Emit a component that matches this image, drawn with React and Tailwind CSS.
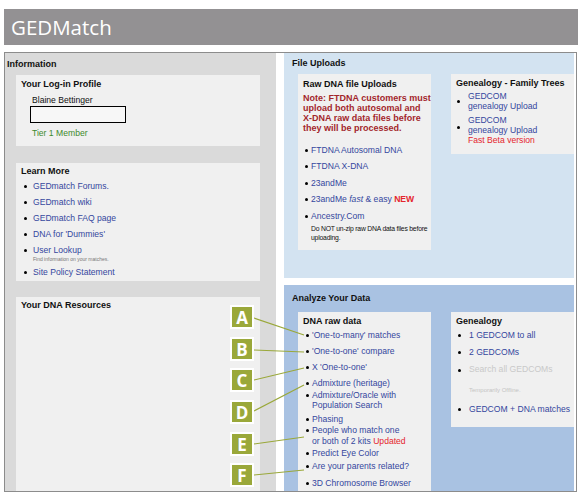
import React from "react";

const Dot = ({ className = "mt-[4px]" }) => (
  <span className={`block w-[3px] h-[3px] rounded-full bg-black shrink-0 ${className}`} />
);

const learnMore = [
  { label: "GEDmatch Forums." },
  { label: "GEDmatch wiki" },
  { label: "GEDmatch FAQ page" },
  { label: "DNA for 'Dummies'" },
  { label: "User Lookup", note: "Find information on your matches." },
  { label: "Site Policy Statement" },
];

// raw data list, margins read off the screenshot
const rawData = [
  { mt: "mt-[3.5px]", lines: ["'One-to-many' matches"] },
  { mt: "mt-[6px]", lines: ["'One-to-one' compare"] },
  { mt: "mt-[5px]", lines: ["X 'One-to-one'"] },
  { mt: "mt-[6px]", lines: ["Admixture (heritage)"] },
  { mt: "mt-[1px]", lines: ["Admixture/Oracle with", "Population Search"] },
  { mt: "mt-[3px]", lines: ["Phasing"] },
  { mt: "mt-[1px]", lines: ["People who match one", "or both of 2 kits"], updated: true },
  { mt: "mt-[2px]", lines: ["Predict Eye Color"] },
  { mt: "mt-[2px]", lines: ["Are your parents related?"] },
  { mt: "mt-[7px]", lines: ["3D Chromosome Browser"] },
];

const callouts = [
  { letter: "A", top: "top-[305px]", y: 318, ty: 335 },
  { letter: "B", top: "top-[337px]", y: 350, ty: 352 },
  { letter: "C", top: "top-[368px]", y: 380, ty: 368 },
  { letter: "D", top: "top-[400px]", y: 411, ty: 385 },
  { letter: "E", top: "top-[432px]", y: 444, ty: 437 },
  { letter: "F", top: "top-[463px]", y: 475, ty: 470 },
];

export default function App() {
  return (
    <div className="relative w-[583px] h-[502px] bg-white overflow-hidden font-['Liberation_Sans',Arial,sans-serif] text-[8.6px] text-[#111]">
      {/* header */}
      <div className="ml-[4px] mt-[9px] w-[574px] h-[36px] bg-[#939193] flex items-center pl-[7px]">
        <span className="font-['Open_Sans',sans-serif] text-[20.5px] text-white leading-none">GEDMatch</span>
      </div>

      {/* main frame */}
      <div className="ml-[4px] mt-[7px] w-[573px] h-[440px] border border-[#8c8c8c] flex">
        {/* left column */}
        <div className="w-[271px] bg-[#dadada] flex flex-col">
          <div className="pl-[2px] pt-[6px] leading-[10px] text-[9px] font-bold">Information</div>

          <div className="ml-[11px] mt-[6px] w-[244px] h-[71px] bg-[#f0f0f0]">
            <div className="pl-[5px] pt-[4px] leading-[10px] text-[9px] font-bold">Your Log-in Profile</div>
            <div className="pl-[16px] mt-[6px] leading-[10px]">Blaine Bettinger</div>
            <div className="ml-[14px] mt-[1px] w-[96px] h-[17px] border border-black bg-[#f7f7f7]" />
            <div className="pl-[16px] mt-[5px] leading-[10px] text-[#3d8a2c]">Tier 1 Member</div>
          </div>

          <div className="ml-[11px] mt-[17px] w-[244px] h-[118px] bg-[#f0f0f0]">
            <div className="pl-[5px] pt-[3px] leading-[10px] text-[9px] font-bold">Learn More</div>
            <ul className="mt-[4.5px] flex flex-col gap-[5px]">
              {learnMore.map((item) => (
                <li key={item.label} className="flex items-start pl-[8px]">
                  <Dot />
                  <div className="ml-[6px]">
                    <div className="leading-[11px] text-[#34479e]">{item.label}</div>
                    {item.note && (
                      <div className="text-[5px] leading-[6px] text-[#777]">{item.note}</div>
                    )}
                  </div>
                </li>
              ))}
            </ul>
          </div>

          <div className="ml-[11px] mt-[16px] w-[244px] flex-1 bg-[#f0f0f0]">
            <div className="pl-[5px] pt-[3px] leading-[10px] text-[9px] font-bold">Your DNA Resources</div>
          </div>
        </div>

        {/* right column */}
        <div className="ml-[8px] w-[290px] flex flex-col">
          <div className="h-[225px] bg-[#d3e3f1]">
            <div className="pl-[8px] pt-[5px] leading-[10px] text-[9px] font-bold">File Uploads</div>
            <div className="mt-[6px] flex items-start">
              <div className="ml-[14px] w-[133px] h-[176px] bg-[#f0f0f0]">
                <div className="pl-[5px] pt-[5px] leading-[10px] text-[9px] font-bold">Raw DNA file Uploads</div>
                <div className="pl-[5px] mt-[4px] leading-[10px] text-[9px] font-bold text-[#a3262b]">
                  Note: FTDNA customers must upload both autosomal and X-DNA raw data files before they will be processed.
                </div>
                <ul className="mt-[11.5px] flex flex-col gap-[5.5px]">
                  <li className="flex items-start pl-[7px]">
                    <Dot />
                    <span className="ml-[3px] leading-[11px] text-[#34479e]">FTDNA Autosomal DNA</span>
                  </li>
                  <li className="flex items-start pl-[7px]">
                    <Dot />
                    <span className="ml-[3px] leading-[11px] text-[#34479e]">FTDNA X-DNA</span>
                  </li>
                  <li className="flex items-start pl-[7px]">
                    <Dot />
                    <span className="ml-[3px] leading-[11px] text-[#34479e]">23andMe</span>
                  </li>
                  <li className="flex items-start pl-[7px]">
                    <Dot />
                    <span className="ml-[3px] leading-[11px] text-[#34479e]">
                      23andMe <i>fast</i> &amp; easy <span className="font-bold text-[#e5252d]">NEW</span>
                    </span>
                  </li>
                  <li className="flex items-start pl-[7px]">
                    <Dot />
                    <div className="ml-[3px]">
                      <div className="leading-[11px] text-[#34479e]">Ancestry.Com</div>
                      <div className="mt-[2px] text-[6.8px] leading-[9px] tracking-[-0.2px] text-[#111]">
                        Do NOT un-zip raw DNA data files before uploading.
                      </div>
                    </div>
                  </li>
                </ul>
              </div>

              <div className="ml-[20px] flex-1 h-[80px] bg-[#f0f0f0]">
                <div className="pl-[5px] pt-[4px] leading-[10px] text-[9px] font-bold">Genealogy - Family Trees</div>
                <ul className="mt-[3px] flex flex-col gap-[4px]">
                  <li className="flex items-start pl-[6px]">
                    <Dot className="mt-[8.5px]" />
                    <div className="ml-[8px] leading-[10px] text-[#34479e]">
                      GEDCOM<br />genealogy Upload
                    </div>
                  </li>
                  <li className="flex items-start pl-[6px]">
                    <Dot className="mt-[10.5px]" />
                    <div className="ml-[8px] leading-[10px] text-[#34479e]">
                      GEDCOM<br />genealogy Upload<br />
                      <span className="text-[#e5252d]">Fast Beta version</span>
                    </div>
                  </li>
                </ul>
              </div>
            </div>
          </div>

          <div className="mt-[7px] flex-1 bg-[#a9c2e2] flex flex-col">
            <div className="pl-[8px] pt-[8px] leading-[10px] text-[9px] font-bold">Analyze Your Data</div>
            <div className="mt-[9px] flex flex-1 items-start">
              <div className="ml-[14px] w-[133px] self-stretch bg-[#f0f0f0]">
                <div className="pl-[5px] pt-[4px] leading-[10px] text-[9px] font-bold">DNA raw data</div>
                <ul className="flex flex-col">
                  {rawData.map((item) => (
                    <li key={item.lines[0]} className={`flex items-start pl-[8px] ${item.mt}`}>
                      <Dot />
                      <div className="ml-[3px] leading-[10.5px] text-[#34479e]">
                        {item.lines.map((l, i) => (
                          <div key={l}>
                            {l}
                            {item.updated && i === item.lines.length - 1 && (
                              <span className="text-[#e5252d]"> Updated</span>
                            )}
                          </div>
                        ))}
                      </div>
                    </li>
                  ))}
                </ul>
              </div>

              <div className="ml-[20px] flex-1 h-[115px] bg-[#f0f0f0]">
                <div className="pl-[5px] pt-[4px] leading-[10px] text-[9px] font-bold">Genealogy</div>
                <ul className="flex flex-col">
                  <li className="flex items-start pl-[7px] mt-[3.5px]">
                    <Dot />
                    <span className="ml-[8px] leading-[11px] text-[#34479e]">1 GEDCOM to all</span>
                  </li>
                  <li className="flex items-start pl-[7px] mt-[6px]">
                    <Dot />
                    <span className="ml-[8px] leading-[11px] text-[#34479e]">2 GEDCOMs</span>
                  </li>
                  <li className="flex items-start pl-[7px] mt-[6px]">
                    <Dot className="mt-[5px]" />
                    <div className="ml-[8px]">
                      <div className="leading-[11px] text-[#c9c9c9]">Search all GEDCOMs</div>
                      <div className="mt-[12px] text-[6px] leading-[6px] text-[#c4c4c4]">Temporarily Offline.</div>
                    </div>
                  </li>
                  <li className="flex items-start pl-[7px] mt-[11px]">
                    <Dot />
                    <span className="ml-[8px] leading-[11px] whitespace-nowrap text-[#34479e]">GEDCOM + DNA matches</span>
                  </li>
                </ul>
              </div>
            </div>
          </div>
        </div>
      </div>

      {/* callout lines */}
      <svg className="absolute inset-0 pointer-events-none" width="583" height="502">
        {callouts.map((c) => (
          <line key={c.letter} x1="254" y1={c.y} x2="304" y2={c.ty} stroke="#9aa83a" strokeWidth="1.2" />
        ))}
      </svg>

      {/* callout badges */}
      {callouts.map((c) => (
        <div
          key={c.letter}
          className={`absolute left-[230px] ${c.top} w-[24px] h-[24px] border-2 border-white bg-[#9aa83a] flex items-center justify-center font-['Open_Sans',sans-serif] font-bold text-[17px] text-white leading-none`}
        >
          {c.letter}
        </div>
      ))}
    </div>
  );
}
